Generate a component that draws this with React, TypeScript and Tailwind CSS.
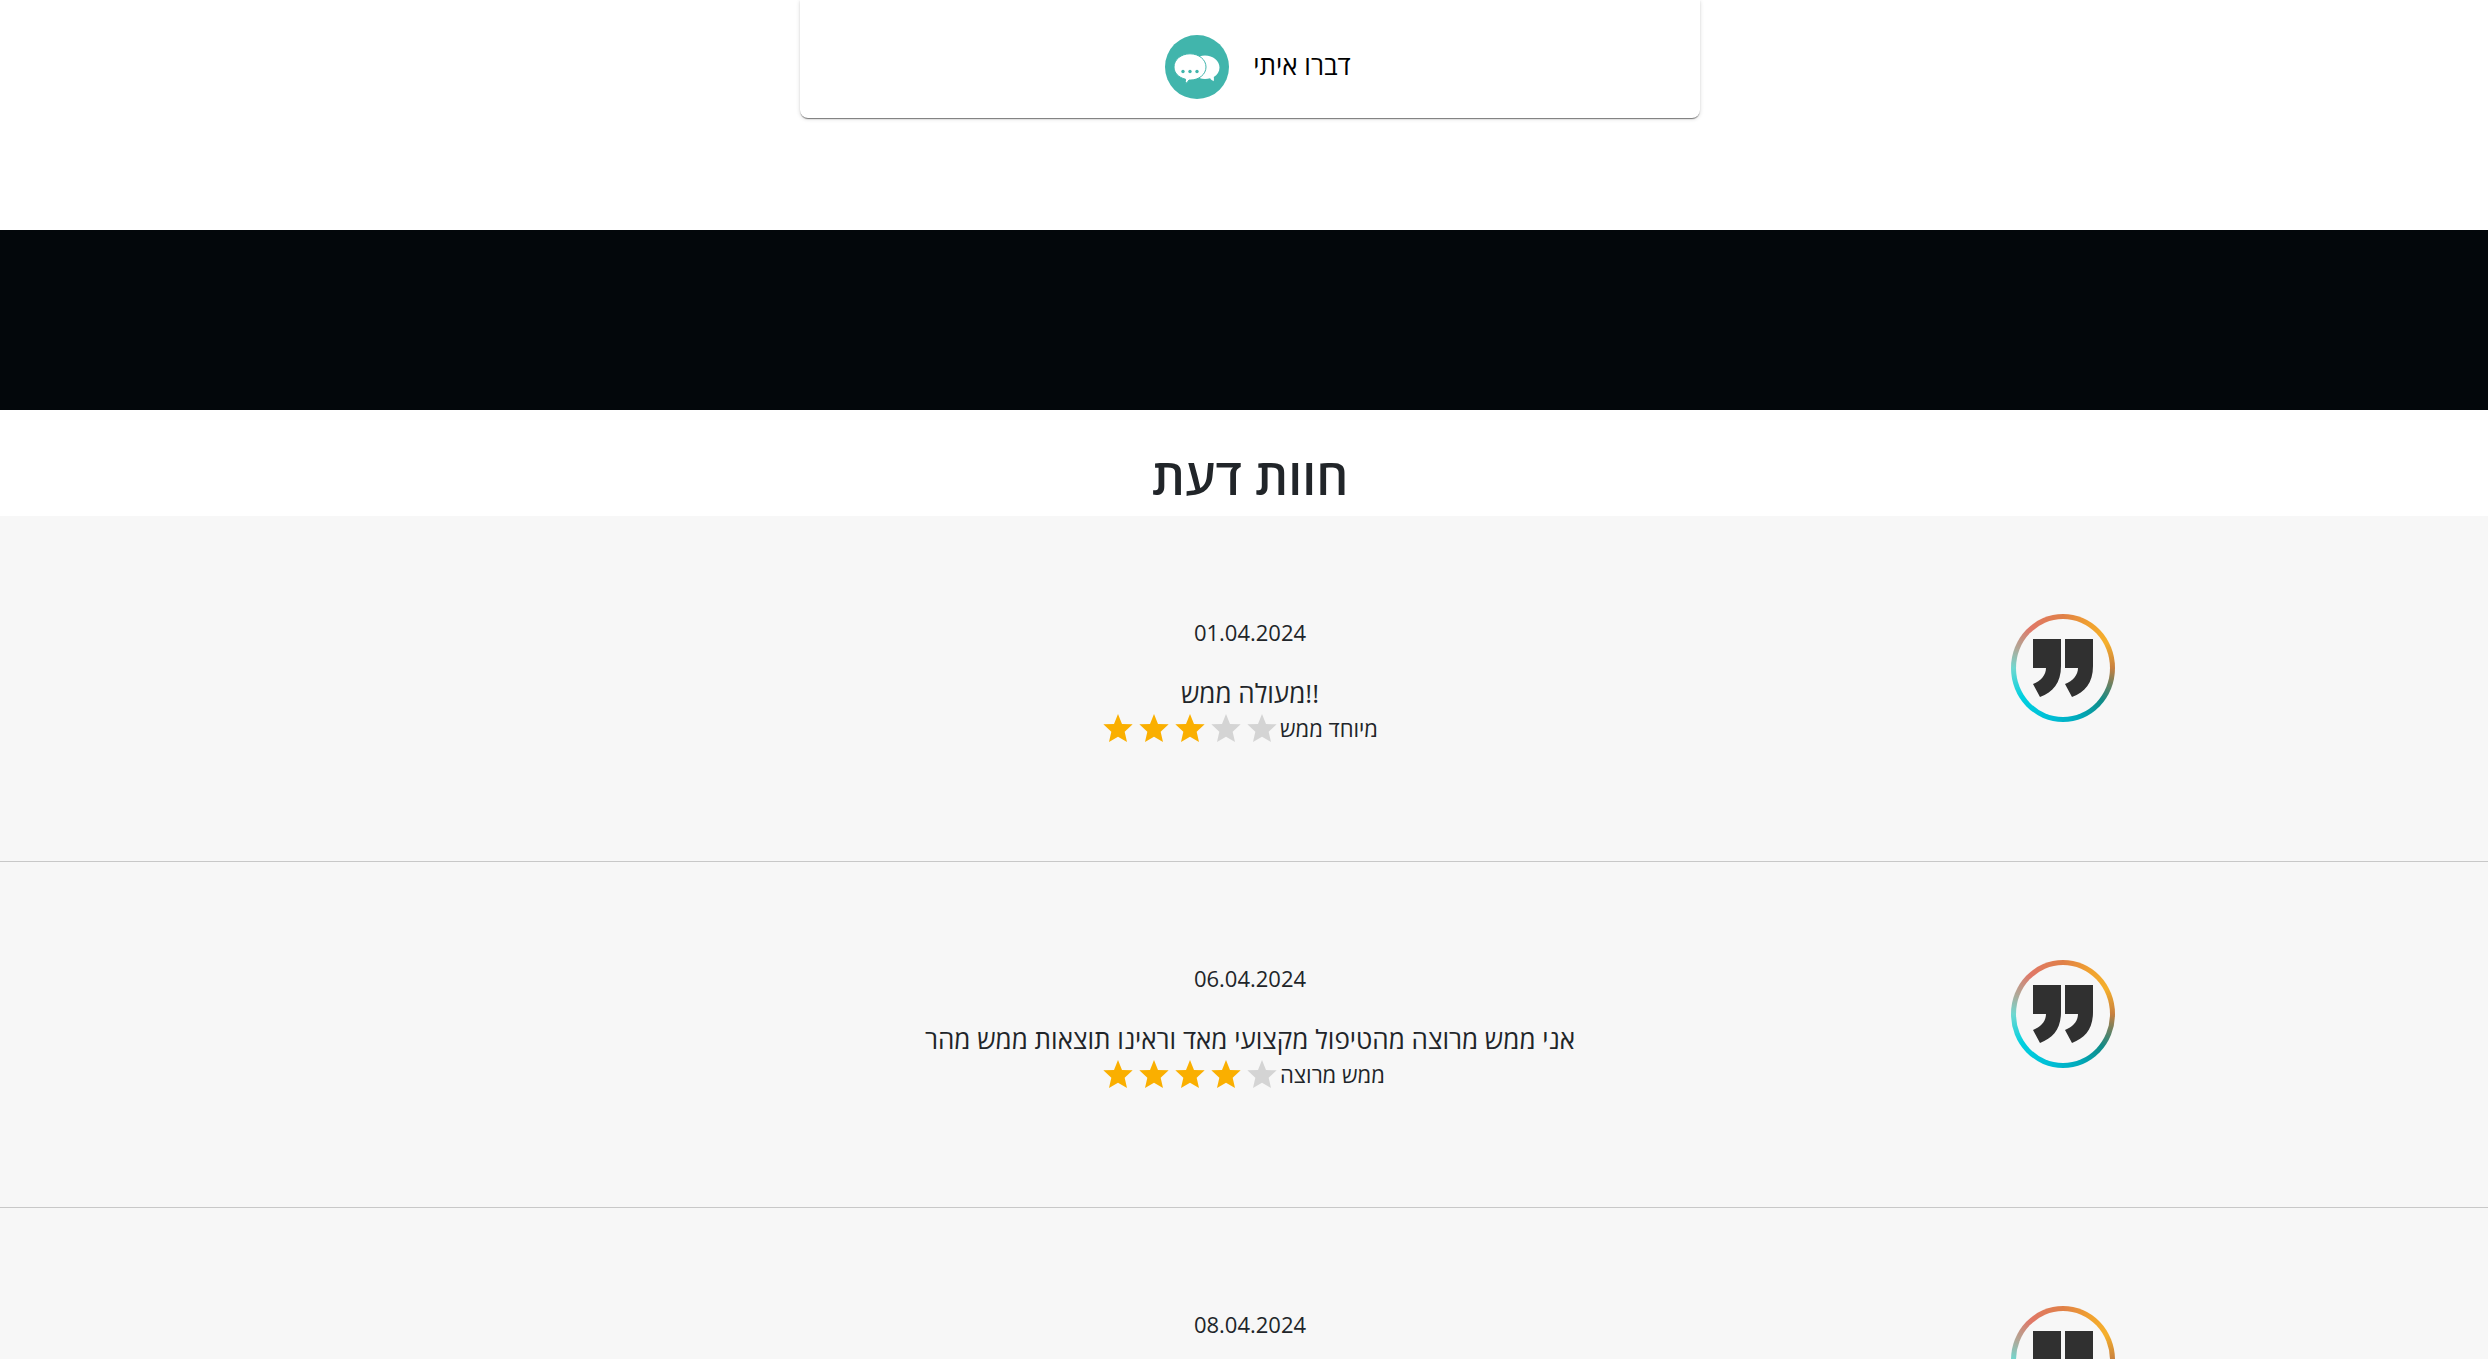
import React from "react";

type Review = { date: string; text: string; title: string; rating: number };

const reviews: Review[] = [
  { date: "01.04.2024", text: "מעולה ממש!!", title: "מיוחד ממש", rating: 3 },
  {
    date: "06.04.2024",
    text: "אני ממש מרוצה מהטיפול מקצועי מאד וראינו תוצאות ממש מהר",
    title: "ממש מרוצה",
    rating: 4,
  },
  { date: "08.04.2024", text: "", title: "", rating: 5 },
];

function ChatIcon() {
  return (
    <svg viewBox="0 0 64 64" className="h-16 w-16" aria-hidden="true">
      <circle cx="32" cy="32" r="32" fill="#41b5ac" />
      <path
        d="M40 20.500c8 0 14.500 5 14.500 12 0 4-2.200 7.500-5.700 9.600.2 1.600.2 2.800-.2 4.100-1.500-.6-2.700-1.700-3.500-2.900-1.600.4-3.300.6-5.100.6-8 0-14.500-5-14.500-11.500S32 20.500 40 20.500z"
        fill="#fff"
      />
      <path
        d="M25 18.800c8.900 0 16 5.800 16 13.200s-7.100 13.100-16 13.100l-1-.1c-.7 1.300-1.800 2.600-3.300 3.500-.3-1.300-.5-2.700-.2-4.300C13.600 42.600 9 37.900 9 32c0-7.400 7.100-13.200 16-13.200z"
        fill="#fff"
        stroke="#41b5ac"
      />
      <circle cx="18" cy="36.500" r="1.700" fill="#41b5ac" />
      <circle cx="25" cy="36.500" r="1.700" fill="#41b5ac" />
      <circle cx="32" cy="36.500" r="1.700" fill="#41b5ac" />
    </svg>
  );
}

function QuoteBadge() {
  return (
    <div className="flex h-27 w-26 items-center justify-center rounded-[50%] bg-[conic-gradient(#e08048,#f0a030_30deg,#f5b02c_60deg,#c88040_90deg,#6f8060_108deg,#108c88_130deg,#00a8b8_160deg,#00bcd4_190deg,#00d0e0_235deg,#70d8d0_270deg,#b0a898_293deg,#e07868_320deg,#e08048)] p-[5px]">
      <div className="flex h-full w-full items-center justify-center rounded-[50%] bg-[#f7f7f7]">
        <svg viewBox="0 0 60 58" className="h-[58px] w-[60px]" fill="#303030" aria-hidden="true">
          <path d="M0 0h28v27c0 17-8 26-21 31L0 45c8-3 13-9 13-16H0z" />
          <path d="M32 0h28v27c0 17-8 26-21 31l-7-13c8-3 13-9 13-16H32z" />
        </svg>
      </div>
    </div>
  );
}

function Star({ filled }: { filled: boolean }) {
  return (
    <svg
      viewBox="0 0 88 84"
      className={filled ? "h-7 w-[30px] text-[#faaf00]" : "h-7 w-[30px] text-[#d4d4d4]"}
      fill="currentColor"
      aria-hidden="true"
    >
      <path d="M44 0 56 30 88 31 64 53 71 84 44 68 17 84 24 53 0 31 32 30z" />
    </svg>
  );
}

function ReviewRow({ review }: { review: Review }) {
  return (
    <li className="grid h-[346px] grid-cols-3 border-b border-[#c8c8c8] pt-24 pl-3">
      <article className="col-start-2 flex flex-col items-center">
        <time className="mt-0.5 text-[22px] leading-9">{review.date}</time>
        <p className="mt-6 h-9 text-[26px] leading-[38px]">{review.text}</p>
        <div className="flex h-9 w-[294px] items-center gap-[3px]">
          <div className="flex gap-1.5" role="img" aria-label={`${review.rating} / 5`}>
            {[1, 2, 3, 4, 5].map((n) => (
              <Star key={n} filled={n <= review.rating} />
            ))}
          </div>
          <span className="text-[22px] leading-9 whitespace-nowrap">{review.title}</span>
        </div>
      </article>
      <div className="flex items-start justify-center pt-0.5 pr-6">
        <QuoteBadge />
      </div>
    </li>
  );
}

export default function App() {
  return (
    <main className="h-screen overflow-hidden bg-white font-['Open_Sans','Noto_Sans',sans-serif] text-[#212529]">
      <section className="flex h-[230px] justify-center pl-3">
        <div className="flex h-[118px] w-[900px] items-start justify-center rounded-b-lg pt-[35px] shadow-[0_2px_1px_-1px_rgba(0,0,0,0.35),0_1px_1px_rgba(0,0,0,0.2),0_1px_4px_rgba(0,0,0,0.15)]">
          <button type="button" className="flex items-center gap-6 pl-4 text-[26px] text-black">
            <ChatIcon />
            <span className="pb-1">דברו איתי</span>
          </button>
        </div>
      </section>
      <div className="h-[180px] bg-[#03070b]" />
      <h1 className="h-[106px] pt-9 pl-3 text-center text-[50px] leading-[60px] font-semibold">
        חוות דעת
      </h1>
      <ul className="bg-[#f7f7f7]">
        {reviews.map((review) => (
          <ReviewRow key={review.date} review={review} />
        ))}
      </ul>
    </main>
  );
}
